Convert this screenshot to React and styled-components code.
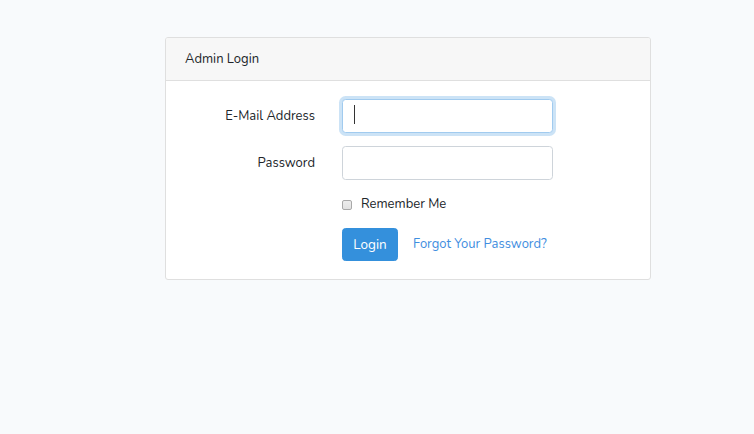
import React from "react";
import styled, { createGlobalStyle } from "styled-components";

const Global = createGlobalStyle`
  html, body { margin: 0; padding: 0; }
  body {
    background: #f8fafc;
    font-family: "Nunito", "Lato", "Noto Sans", sans-serif;
    font-size: 13px;
    line-height: 21px;
    color: #212529;
  }
  * { box-sizing: border-box; }
`;

const Page = styled.div`
  padding: 37px 0 0 165px;
  min-height: 434px;
`;

const Card = styled.div`
  width: 486px;
  background: #fff;
  border: 1px solid #dfdfdf;
  border-radius: 3px;
  overflow: hidden;
`;

const CardHeader = styled.div`
  background: #f7f7f7;
  border-bottom: 1px solid #dfdfdf;
  padding: 10.5px 19px;
  line-height: 21px;
`;

const CardBody = styled.form`
  padding: 18px;
  display: grid;
  grid-template-columns: 131px 211px;
  column-gap: 27px;
  row-gap: 13px;
  align-items: center;
`;

const Label = styled.label`
  text-align: right;
  align-self: start;
  padding-top: 7px;
  line-height: 21px;
`;

const Field = styled.div`
  position: relative;
`;

const Input = styled.input`
  display: block;
  width: 211px;
  height: 34px;
  padding: 5px 11px;
  font: inherit;
  color: #495057;
  background: #fff;
  border: 1px solid ${(p) => (p.$focused ? "#a1cbef" : "#ced4da")};
  border-radius: 3.6px;
  outline: none;
  box-shadow: ${(p) => (p.$focused ? "0 0 0 3px rgba(52,144,220,0.25)" : "none")};
`;

const Caret = styled.span`
  position: absolute;
  left: 12px;
  top: 6px;
  width: 1px;
  height: 19px;
  background: #333;
`;

const CheckRow = styled.label`
  grid-column: 2;
  display: flex;
  align-items: center;
  gap: 9px;
  height: 21px;
  margin-top: 1px;
`;

const Check = styled.span`
  width: 10px;
  height: 10px;
  border: 1px solid #a9a9a9;
  border-radius: 2px;
  background: linear-gradient(#ededed, #e2e2e2);
  margin-top: 1px;
`;

const Actions = styled.div`
  grid-column: 2;
  display: flex;
  align-items: center;
  gap: 15px;
  white-space: nowrap;
`;

const Button = styled.button`
  height: 33px;
  width: 56px;
  padding: 0;
  font: inherit;
  font-size: 13.5px;
  color: #fff;
  background: #3490dc;
  border: 1px solid #3490dc;
  border-radius: 3.6px;
`;

const Link = styled.a`
  color: #3f8ee0;
  text-decoration: none;
`;

export default function App() {
  return (
    <>
      <Global />
      <Page>
        <Card>
          <CardHeader>Admin Login</CardHeader>
          <CardBody onSubmit={(e) => e.preventDefault()}>
            <Label htmlFor="email">E-Mail Address</Label>
            <Field>
              <Input id="email" type="email" $focused />
              <Caret />
            </Field>
            <Label htmlFor="password">Password</Label>
            <Field>
              <Input id="password" type="password" />
            </Field>
            <CheckRow>
              <Check />
              Remember Me
            </CheckRow>
            <Actions>
              <Button type="submit">Login</Button>
              <Link href="#">Forgot Your Password?</Link>
            </Actions>
          </CardBody>
        </Card>
      </Page>
    </>
  );
}
